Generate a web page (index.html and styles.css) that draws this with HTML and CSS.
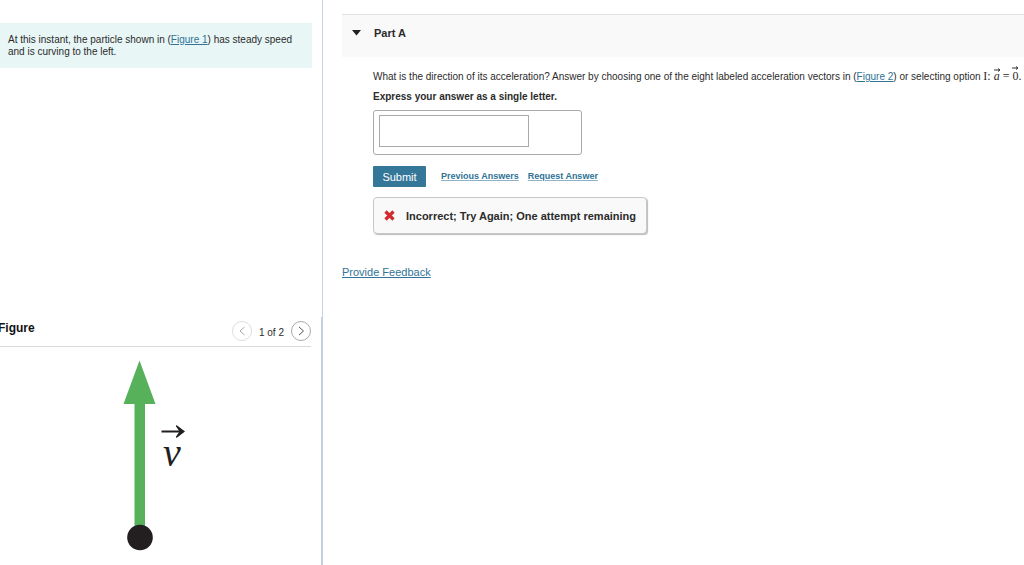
FILE: index.html
```html
<!DOCTYPE html>
<html lang="en">
<head>
    <meta charset="UTF-8">
    <meta name="viewport" content="width=device-width, initial-scale=1.0">
    <title>Part A</title>
    <link rel="stylesheet" href="styles.css">
</head>
<body>

    <aside class="sidebar">
        <p class="intro">At this instant, the particle shown in (<a href="#figure">Figure 1</a>) has steady speed and is curving to the left.</p>

        <section class="figure" id="figure">
            <div class="figure-header">
                <h2>Figure</h2>
                <div class="pager">
                    <button class="pager-btn" aria-label="Previous figure" disabled>
                        <svg width="8" height="10" viewBox="0 0 8 10"><path d="M6.500 1L2 5l4.500 4"/></svg>
                    </button>
                    <span>1 of 2</span>
                    <button class="pager-btn" aria-label="Next figure">
                        <svg width="8" height="10" viewBox="0 0 8 10"><path d="M2 1l4.500 4L2 9"/></svg>
                    </button>
                </div>
            </div>
            <svg class="diagram" width="70" height="194" viewBox="0 0 70 194">
                <path d="M12.500 175V47H1.500L17.500 3.500l16 43.500H23V175z" fill="#57b05a"/>
                <circle cx="18" cy="180.500" r="12.800" fill="#231f20"/>
                <path d="M39.500 74.500H60" fill="none" stroke="#231f20" stroke-width="2"/>
                <path d="M54.500 68l8.500 6.500-8.500 6.500-.6-1.200 3.600-5.300-3.600-5.300z" fill="#231f20"/>
                <text x="41" y="109" class="vector-label">v</text>
            </svg>
        </section>
    </aside>

    <main class="content">
        <header class="part-header">
            <svg width="9" height="6" viewBox="0 0 9 6"><path d="M0 0h9L4.500 5.500z" fill="#222"/></svg>
            <h1>Part A</h1>
        </header>

        <form class="part-body">
            <p class="question">What is the direction of its acceleration? Answer by choosing one of the eight labeled acceleration vectors in (<a href="#figure">Figure 2</a>) or selecting option <span class="math">I: <span class="vec"><i>a</i><svg width="7" height="4" viewBox="0 0 7 4"><path d="M0 2h6M4 .5L6 2 4 3.500"/></svg></span> = <span class="vec tall">0<svg width="7" height="4" viewBox="0 0 7 4"><path d="M0 2h6M4 .5L6 2 4 3.500"/></svg></span>.</span></p>
            <label class="instructions" for="answer">Express your answer as a single letter.</label>
            <div class="answer-box">
                <input type="text" id="answer">
            </div>
            <div class="actions">
                <button class="submit" type="button">Submit</button>
                <a href="#">Previous Answers</a>
                <a href="#">Request Answer</a>
            </div>
            <div class="feedback">
                <svg width="11" height="11" viewBox="0 0 11 11"><path d="M1.500 1.500l8 8M9.500 1.500l-8 8" stroke="#d12a2f" stroke-width="3.200"/></svg>
                <span>Incorrect; Try Again; One attempt remaining</span>
            </div>
        </form>

        <a class="provide" href="#">Provide Feedback</a>
    </main>

</body>
</html>
```
FILE: styles.css
```css
* {
    box-sizing: border-box;
}
body {
    margin: 0;
    display: flex;
    min-height: 100vh;
    background: #fff;
    color: #2b2b2b;
    font-family: "Liberation Sans", Arial, sans-serif;
    font-size: 10px;
    line-height: 12px;
}
h1, h2, p {
    margin: 0;
}
a {
    color: #2f7396;
    text-underline-offset: 1px;
}
.sidebar {
    flex: 0 0 323px;
    display: flex;
    flex-direction: column;
    border-right: 1px solid #c9d2e2;
}
.intro {
    margin: 23px 10px 0 0;
    padding: 11px 16px 10px 8px;
    background: #e8f6f6;
}
.figure {
    margin-top: auto;
    height: 248px;
    padding-right: 10px;
    border-right: 1px solid #c3cfe0;
}
.figure-header {
    display: flex;
    justify-content: space-between;
    height: 30px;
    border-bottom: 1px solid #d9d9d9;
}
.figure-header h2 {
    margin-left: -2px;
    padding-top: 5px;
    color: #111;
    font-size: 12px;
}
.pager {
    display: flex;
    align-items: flex-start;
    gap: 7px;
    padding-top: 4px;
    line-height: 24px;
}
.pager-btn {
    display: flex;
    align-items: center;
    justify-content: center;
    width: 20px;
    height: 20px;
    padding: 0;
    border: 1px solid #aaa;
    border-radius: 50%;
    background: #fff;
}
.pager-btn:disabled {
    border-color: #ddd;
}
.pager-btn path {
    fill: none;
    stroke: #555;
}
.pager-btn:disabled path {
    stroke: #aaa;
}
.diagram {
    display: block;
    margin: 10px auto 0 122px;
}
.vector-label {
    fill: #231f20;
    font-family: "Liberation Serif", serif;
    font-size: 40px;
    font-style: italic;
}
.content {
    flex: 1;
    min-width: 0;
    padding: 14px 0 0 19px;
}
.part-header {
    display: flex;
    align-items: center;
    gap: 13px;
    height: 43px;
    padding: 0 10px 6px;
    border-top: 1px solid #e2e2e2;
    background: #f9f9f9;
}
.part-header h1 {
    font-size: 11px;
}
.part-body {
    padding: 10px 0 0 31px;
}
.question {
    line-height: 18px;
    white-space: nowrap;
}
.math {
    font-family: "Liberation Serif", serif;
    font-size: 12px;
}
.vec {
    position: relative;
}
.vec svg {
    position: absolute;
    left: 0;
    top: -1px;
    overflow: visible;
}
.vec.tall svg {
    top: -3px;
}
.vec path {
    fill: none;
    stroke: #333;
}
.instructions {
    display: block;
    margin-top: 5px;
    font-weight: bold;
}
.answer-box {
    width: 209px;
    margin-top: 7px;
    padding: 4px 5px 7px;
    border: 1px solid #aaa;
    border-radius: 3px;
}
.answer-box input {
    display: block;
    width: 150px;
    height: 32px;
    padding: 4px;
    border: 1px solid #aaa;
}
.actions {
    display: flex;
    align-items: center;
    gap: 9px;
    margin-top: 11px;
    font-weight: bold;
}
.actions a {
    padding-bottom: 2px;
    font-size: 9px;
    text-decoration-color: #8fb3c6;
}
.submit {
    margin-right: 6px;
    width: 53px;
    height: 21px;
    padding: 0;
    border: none;
    border-radius: 1px;
    background: #347799;
    color: #fff;
    font-family: inherit;
    font-size: 11px;
}
.feedback {
    display: flex;
    align-items: center;
    gap: 11px;
    width: fit-content;
    height: 37px;
    margin-top: 10px;
    padding: 0 10px;
    border: 1px solid #c8c8c8;
    border-radius: 4px;
    background: #f9f9f9;
    box-shadow: 1px 1px 1px #bbb;
    font-size: 11px;
    font-weight: bold;
}
.provide {
    display: inline-block;
    margin-top: 32px;
    font-size: 11px;
}
```
